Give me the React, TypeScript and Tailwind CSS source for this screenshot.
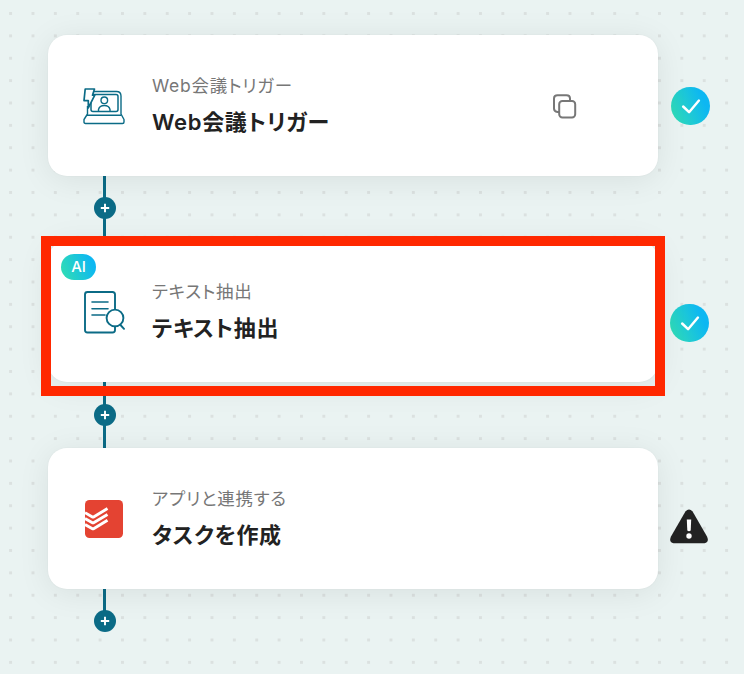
import type { ReactNode } from "react";

function LaptopIcon() {
  return (
    <svg width="42" height="37" viewBox="0 0 42 37" fill="none" stroke="#0b6b86" strokeWidth="1.4" strokeLinejoin="round">
      <path d="M10 3.500H33.500Q38 3.500 38 8V26L41 31.500V34Q41 35.500 39.500 35.500H2.500Q1 35.500 1 34V31.500L4.500 26V18" />
      <path d="M4 27.300H38" strokeWidth="1.600" />
      <rect x="8" y="6.500" width="27" height="17" rx="2" strokeWidth="1.500" />
      <circle cx="21.300" cy="12.300" r="3.300" />
      <path d="M15.500 23V21.500Q16.500 17.500 21.300 17.500T27 21.500V23" />
      <path d="M2.200 1H11.500L9.500 7.200H11.800L5.300 19.800V12.600H1Z" fill="#fff" strokeWidth="1.700" />
    </svg>
  );
}

function ExtractIcon() {
  return (
    <svg width="42" height="43" viewBox="0 0 42 43" fill="none" stroke="#0b6b86" strokeWidth="1.900" strokeLinecap="round" strokeLinejoin="round">
      <path d="M32 17.800V3.500Q32 1 29.500 1H4.500Q2 1 2 3.500V39Q2 41.500 4.500 41.500H29.500Q32 41.500 32 39V35.500" />
      <path d="M9 11H25M9 17.700H25M9 24H22" strokeWidth="1.600" />
      <circle cx="32" cy="27" r="8.400" />
      <path d="M37.500 34L41 37.800" />
    </svg>
  );
}

function TodoistIcon() {
  return (
    <svg width="38" height="38" viewBox="0 0 38 38">
      <rect width="38" height="38" rx="4.500" fill="#e44332" />
      <path d="M0 12.700L7 16.700Q8 17.300 9 16.700L22.500 8.500M0 18.600L7 22.600Q8 23.200 9 22.600L22.500 14.400M0 24.500L7 28.500Q8 29.100 9 28.500L22.500 20.300" fill="none" stroke="#fff" strokeWidth="2.900" />
    </svg>
  );
}

function CopyIcon() {
  return (
    <svg width="24" height="25" viewBox="0 0 24 25" fill="none" stroke="#777" strokeWidth="2">
      <path d="M6 18H4.500Q1 17.500 1 14.500V4.500Q1 1.200 4.500 1.200H13.500Q17 1.200 17 4.500V6.500" />
      <rect x="6.200" y="7" width="16" height="16.500" rx="3.200" />
    </svg>
  );
}

function CheckBadge() {
  return (
    <div className="flex size-[38.500px] items-center justify-center rounded-full bg-[linear-gradient(68deg,#31ddb4_5%,#0db7f2_78%)]">
      <svg width="39" height="39" viewBox="0 0 39 39" fill="none" stroke="#fff" strokeWidth="2.500" strokeLinecap="round" strokeLinejoin="round">
        <path d="M12.300 19.500L18.300 25.300L28.300 13.500" />
      </svg>
    </div>
  );
}

function WarningIcon() {
  return (
    <svg width="38" height="35" viewBox="0 0 38 35">
      <path d="M15.400 2.500Q19 -1.500 22.600 2.500L37 27.500Q39.500 33 34.500 34.300H3.500Q-1.500 33 1 27.500Z" fill="#222" />
      <path d="M16.800 10.500H21.200L20.700 21.500Q19 23 17.300 21.500Z" fill="#fff" />
      <circle cx="19" cy="27" r="2.700" fill="#fff" />
    </svg>
  );
}

function Connector({ last = false }: { last?: boolean }) {
  return (
    <div className={last ? "ml-[46px] flex h-[43px] w-[22px] flex-col items-center" : "ml-[46px] flex h-[65.500px] w-[22px] flex-col items-center"}>
      <span className="mr-px h-[22.500px] w-[3px] shrink-0 bg-[#0b6b86]" />
      <svg width="22" height="22" viewBox="0 0 22 22" className="-my-px shrink-0">
        <circle cx="11" cy="11" r="11" fill="#0b6b86" />
        <path d="M11 6.800V15.200M6.800 11H15.200" stroke="#fff" strokeWidth="1.900" />
      </svg>
      {!last && <span className="mr-px w-[3px] grow bg-[#0b6b86]" />}
    </div>
  );
}

type StepProps = { icon: ReactNode; label: string; title: string; status: ReactNode; action?: ReactNode; badge?: ReactNode };

function Step({ icon, label, title, status, action, badge }: StepProps) {
  return (
    <div className="flex items-center gap-[13px]">
      <div className="relative flex h-[141px] w-[610px] items-center rounded-[19px] bg-white pl-[35px] shadow-[0_4px_32px_rgba(0,0,0,0.08),0_0_2px_rgba(0,0,0,0.05)]">
        {badge}
        <div className="mt-[2px] flex w-[42px] justify-center">{icon}</div>
        <div className="-mt-[2.500px] ml-[27px] flex grow flex-col [font-feature-settings:'palt']">
          <span className="text-[17.500px] leading-[37px] tracking-[0.750px] text-[#777]">{label}</span>
          <span className="text-[22px] leading-[37px] font-semibold tracking-[0.700px] text-[#222]">{title}</span>
        </div>
        {action && <div className="mt-[3px] mr-[81px]">{action}</div>}
      </div>
      {status}
    </div>
  );
}

export default function App() {
  return (
    <main className="relative h-[674px] w-[744px] overflow-hidden bg-[#eaf3f2] bg-[radial-gradient(circle_at_center,#dbe1e0_1.600px,transparent_1.900px)] bg-size-[22.380px_22.380px] bg-position-[-0.600px_2.300px] pt-[34.500px] pl-[48px] font-[Inter,'Noto_Sans_CJK_JP',sans-serif]">
      <Step icon={<LaptopIcon />} label="Web会議トリガー" title="Web会議トリガー" action={<CopyIcon />} status={<div className="mt-[2px]"><CheckBadge /></div>} />
      <Connector />
      <Step
        icon={<ExtractIcon />}
        label="テキスト抽出"
        title="テキスト抽出"
        status={<div className="mt-[23px] -ml-px"><CheckBadge /></div>}
        badge={
          <span className="absolute top-[13px] left-[13px] flex h-[26px] w-[35px] items-center justify-center rounded-full bg-[linear-gradient(68deg,#31ddb4_5%,#0db7f2_85%)] text-[15px] font-medium text-white">
            AI
          </span>
        }
      />
      <Connector />
      <Step icon={<TodoistIcon />} label="アプリと連携する" title="タスクを作成" status={<div className="mt-[17px] -ml-px"><WarningIcon /></div>} />
      <Connector last />
      <div className="absolute top-[236px] left-[41px] h-[160px] w-[624px] border-[10px] border-[#ff2800]" />
    </main>
  );
}
